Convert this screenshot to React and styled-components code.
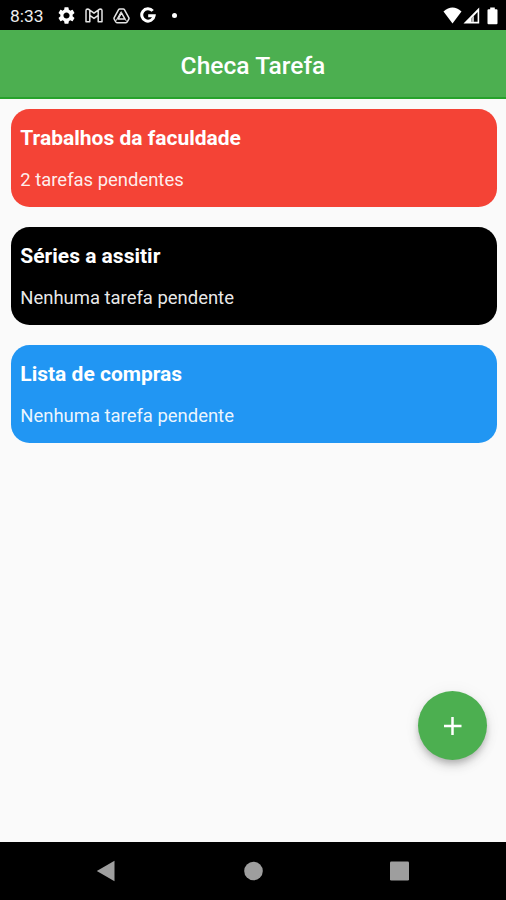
import React from "react";
import styled, { createGlobalStyle } from "styled-components";

const GlobalStyle = createGlobalStyle`
  * { box-sizing: border-box; }
  body { margin: 0; background: #fafafa; font-family: Roboto, "Noto Sans", sans-serif; }
`;

const Screen = styled.div`
  position: relative;
  display: flex;
  flex-direction: column;
  width: 506px;
  height: 900px;
  overflow: hidden;
  background: #fafafa;
`;

const StatusBar = styled.header`
  display: flex;
  justify-content: space-between;
  align-items: center;
  height: 30px;
  padding: 1px 8px 0 10px;
  background: #000;
  color: #fff;
`;

const StatusGroup = styled.div`
  display: flex;
  align-items: center;
  gap: ${(p) => p.$gap}px;
`;

const Clock = styled.span`
  width: 38px;
  font-size: 17.4px;
  line-height: 20px;
  white-space: nowrap;
  color: #eee;
`;

const Icon = styled.svg`
  display: block;
  flex: none;
`;

const AppBar = styled.div`
  display: flex;
  align-items: center;
  justify-content: center;
  height: 69px;
  padding-top: 5px;
  background: #4caf50;
  border-bottom: 2px solid #26a22b;
`;

const Title = styled.h1`
  margin: 0;
  font-size: 24.6px;
  font-weight: 500;
  line-height: 30px;
  color: #fff;
`;

const List = styled.main`
  flex: 1;
  display: flex;
  flex-direction: column;
  gap: 20px;
  padding: 10px 9.5px 0 10.5px;
`;

const Card = styled.section`
  height: 98px;
  padding: 16px 9.8px 0;
  border-radius: 18.5px;
  background: ${(p) => p.$color};
  color: #fff;
`;

const CardTitle = styled.h2`
  margin: 0 0 17px;
  font-size: 21px;
  font-weight: 700;
  line-height: 26px;
`;

const CardText = styled.p`
  margin: 0;
  font-size: 18.45px;
  line-height: 24px;
  color: rgba(255, 255, 255, 0.93);
`;

const AddButton = styled.button`
  position: absolute;
  right: 19px;
  bottom: 140px;
  display: flex;
  align-items: center;
  justify-content: center;
  width: 69px;
  height: 69px;
  padding: 0;
  border: 0;
  border-radius: 50%;
  background: #4caf50;
  box-shadow: 0 4px 6px -1px rgba(0, 0, 0, 0.2), 0 7px 12px rgba(0, 0, 0, 0.1),
    0 1px 18px rgba(0, 0, 0, 0.05);
`;

const NavBar = styled.nav`
  display: grid;
  grid-template-columns: 20px 20px 22px;
  column-gap: 127px;
  align-items: center;
  height: 58px;
  padding-left: 96px;
  background: #000;
`;

const lists = [
  { title: "Trabalhos da faculdade", text: "2 tarefas pendentes", color: "#f44336" },
  { title: "Séries a assitir", text: "Nenhuma tarefa pendente", color: "#000" },
  { title: "Lista de compras", text: "Nenhuma tarefa pendente", color: "#2196f3" },
];

const Gear = () => (
  <Icon width="17" height="17" viewBox="2 2 20 20" fill="#fff">
    <path d="M19.14 12.94c.04-.3.06-.61.06-.94 0-.32-.02-.64-.07-.94l2.03-1.58a.49.49 0 0 0 .12-.61l-1.92-3.32a.488.488 0 0 0-.59-.22l-2.39.96c-.5-.38-1.03-.7-1.62-.94l-.36-2.54a.484.484 0 0 0-.48-.41h-3.84c-.24 0-.43.17-.47.41l-.36 2.54c-.59.24-1.13.57-1.62.94l-2.39-.96c-.22-.08-.47 0-.59.22L2.74 8.87c-.12.21-.08.47.12.61l2.03 1.58c-.05.3-.09.63-.09.94s.02.64.07.94l-2.03 1.58a.49.49 0 0 0-.12.61l1.92 3.32c.12.22.37.29.59.22l2.39-.96c.5.38 1.03.7 1.62.94l.36 2.54c.05.24.24.41.48.41h3.84c.24 0 .44-.17.47-.41l.36-2.54c.59-.24 1.13-.56 1.62-.94l2.39.96c.22.08.47 0 .59-.22l1.92-3.32c.12-.22.07-.47-.12-.61l-2.01-1.58zM12 15.6c-1.98 0-3.6-1.62-3.6-3.6s1.62-3.6 3.6-3.6 3.6 1.62 3.6 3.6-1.62 3.6-3.6 3.6z" />
  </Icon>
);

const Mail = () => (
  <Icon width="18" height="15" viewBox="0 0 18 15" fill="none" stroke="#e4e4e4" strokeWidth="1.5" strokeLinejoin="round">
    <path d="M1 2.6Q1 1 2.7 1L4.4 1.8 9 5.2 13.6 1.8 15.3 1Q17 1 17 2.6V13.8H13.2V7.4L9 10.4 4.8 7.4V13.8H1ZM4.8 7.4V2.2M13.2 7.4V2.2" />
  </Icon>
);

const Drive = () => (
  <Icon width="17" height="16" viewBox="0 0 17 16" fill="none" stroke="#e4e4e4" strokeWidth="1.5" strokeLinejoin="round">
    <path d="M6.8 1H10.2Q11 1 11.4 1.7L15.8 9.6Q16.2 10.4 15.8 11.1L14.2 14Q13.8 14.7 13 14.7H4Q3.2 14.7 2.8 14L1.2 11.1Q.8 10.4 1.2 9.6L5.6 1.7Q6 1 6.8 1Z" />
    <path d="M8.5 4.8L12 11.1H5Z" />
    <path d="M3 12.8L8.3 3.4M12 11.1L13.8 13.6" strokeWidth="1" />
  </Icon>
);

const Google = () => (
  <Icon width="16" height="17" viewBox="0 0 17 17" fill="none" stroke="#fff" strokeWidth="3.2">
    <path d="M13.5 3.6A6.6 6.6 0 1 0 15 8.8H8.7" />
  </Icon>
);

const Dot = () => (
  <Icon width="16" height="6" viewBox="0 0 16 6">
    <circle cx="8.5" cy="2.5" r="2.5" fill="#fff" />
  </Icon>
);

const Wifi = () => (
  <Icon width="19" height="17" viewBox="0 0 20 17" preserveAspectRatio="none">
    <path d="M.5 4.5Q10-3.6 19.5 4.5L10 16.5Z" fill="#fff" />
  </Icon>
);

const Signal = () => (
  <Icon width="24" height="17" viewBox="0 0 24 17">
    <path fillRule="evenodd" d="M16.2 .5V16.5H.5ZM14.6 5L8.4 11.6V14.7H14.6Z" fill="#fff" />
    <path d="M8.4 11V15H11V8.8Z" fill="#bbb" />
  </Icon>
);

const Battery = () => (
  <Icon width="11" height="18" viewBox="0 0 11 18">
    <path d="M3.2.5H7.8V2.2H9.5Q10.5 2.2 10.5 3.2V16.2Q10.5 17.2 9.5 17.2H1.5Q.5 17.2.5 16.2V3.2Q.5 2.2 1.5 2.2H3.2Z" fill="#fff" />
  </Icon>
);

export default function App() {
  return (
    <>
      <GlobalStyle />
      <Screen>
        <StatusBar>
          <StatusGroup $gap={10}>
            <Clock>8:33</Clock>
            <Gear />
            <Mail />
            <Drive />
            <Google />
            <Dot />
          </StatusGroup>
          <StatusGroup $gap={0.5}>
            <Wifi />
            <Signal />
            <Battery />
          </StatusGroup>
        </StatusBar>
        <AppBar>
          <Title>Checa Tarefa</Title>
        </AppBar>
        <List>
          {lists.map((list) => (
            <Card key={list.title} $color={list.color}>
              <CardTitle>{list.title}</CardTitle>
              <CardText>{list.text}</CardText>
            </Card>
          ))}
        </List>
        <AddButton aria-label="Adicionar">
          <Icon width="18" height="18" viewBox="0 0 18 18">
            <path d="M8.5 0V18M0 9H17.5" stroke="#fff" strokeWidth="2.5" />
          </Icon>
        </AddButton>
        <NavBar>
          <Icon width="20" height="22" viewBox="0 0 20 22">
            <path d="M.8 11L18.5.8V21.2Z" fill="#9e9e9e" />
          </Icon>
          <Icon width="20" height="20" viewBox="0 0 20 20">
            <circle cx="10.5" cy="10" r="9.3" fill="#9e9e9e" />
          </Icon>
          <Icon width="22" height="20" viewBox="0 0 22 20">
            <rect x="0" y=".5" width="19" height="19" rx="1.3" fill="#9e9e9e" />
          </Icon>
        </NavBar>
      </Screen>
    </>
  );
}
